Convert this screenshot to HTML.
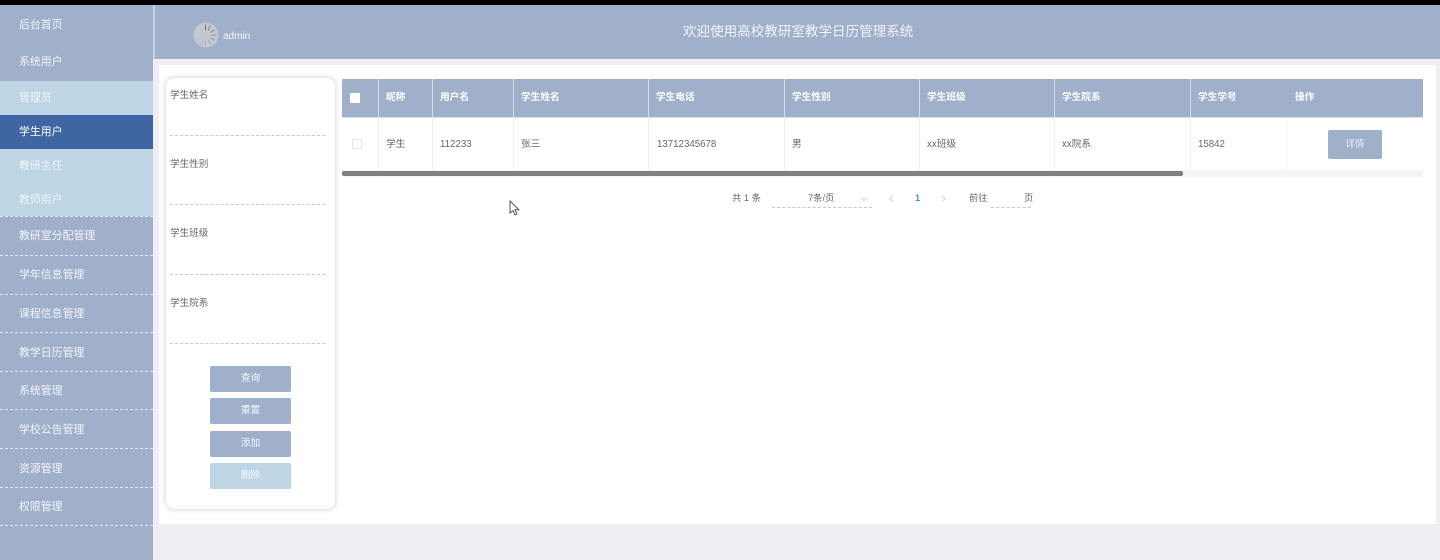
<!DOCTYPE html>
<html lang="zh"><head><meta charset="utf-8"><title>高校教研室教学日历管理系统</title>
<style>
html,body{margin:0;padding:0;background:#f0eef5}
body{width:1440px;height:560px;overflow:hidden;position:relative;font-family:"Liberation Sans","Noto Sans CJK SC",sans-serif;font-size:9.7px;color:#666;filter:blur(.35px)}
div,span{position:absolute;box-sizing:border-box;white-space:nowrap}
.t{line-height:14px;height:14px}
.m{left:19px;color:#f2f4f8;font-size:10.9px;line-height:14px;height:14px}
.dash{left:0;width:153px;height:0;border-top:1px dashed #dfe4ee}
.th{top:79px;height:39px;background:#a0afca;color:#fff;font-weight:bold;line-height:37px;padding-left:7px;border-right:1px solid #d8dfeb;border-bottom:1px solid #d8dfeb}
.td{top:118px;height:52px;background:#fff;line-height:53px;padding-left:7px;border-right:1px solid #eef0f4;color:#666}
.lab{left:170px;color:#666;line-height:14px;height:14px;font-size:9.6px}
.ln{left:170px;width:155px;height:0;border-top:1px dashed #c3c8d4}
.btn{left:210px;width:81px;height:26px;background:#a0afca;border-radius:2px;color:#f4f6fa;text-align:center;line-height:26px}
</style></head><body>
<div style="left:0;top:0;width:1440px;height:5px;background:#000"></div>
<div style="left:0;top:5px;width:153px;height:555px;background:#a0afca"></div>
<div style="left:153px;top:5px;width:2px;height:54px;background:#c9d2e1"></div>
<div style="left:0;top:81px;width:153px;height:135px;background:#bed5e5"></div>
<div style="left:0;top:115px;width:153px;height:34px;background:#3f65a3"></div>
<div class="m" style="top:18px">后台首页</div>
<div class="m" style="top:55px">系统用户</div>
<div class="m" style="top:91px;color:#eef4f8">管理员</div>
<div class="m" style="top:125px;color:#fff">学生用户</div>
<div class="m" style="top:159px;color:#eef4f8">教研主任</div>
<div class="m" style="top:193px;color:#eef4f8">教师用户</div>
<div class="dash" style="top:216px"></div>
<div class="m" style="top:229px">教研室分配管理</div>
<div class="dash" style="top:255px"></div>
<div class="m" style="top:268px">学年信息管理</div>
<div class="dash" style="top:294px"></div>
<div class="m" style="top:307px">课程信息管理</div>
<div class="dash" style="top:332px"></div>
<div class="m" style="top:346px">教学日历管理</div>
<div class="dash" style="top:371px"></div>
<div class="m" style="top:384px">系统管理</div>
<div class="dash" style="top:409px"></div>
<div class="m" style="top:423px">学校公告管理</div>
<div class="dash" style="top:448px"></div>
<div class="m" style="top:462px">资源管理</div>
<div class="dash" style="top:487px"></div>
<div class="m" style="top:500px">权限管理</div>
<div class="dash" style="top:525px"></div>

<div style="left:155px;top:5px;width:1285px;height:54px;background:#a0afca"></div>
<svg style="position:absolute;left:193px;top:21px" width="26" height="28" viewBox="0 0 26 28">
<circle cx="13" cy="14" r="12.5" fill="#c3c7cf"/>
<g stroke-width="1" stroke-linecap="round">
<path d="M12.500 4v5" stroke="#6d7280"/><path d="M17 5l-1.800 4" stroke="#7b808c"/><path d="M21 9l-3.500 2.500" stroke="#858a96"/><path d="M23 14h-4.500" stroke="#8f94a0"/><path d="M21.500 19l-3.800-2" stroke="#989da8"/><path d="M17.500 23l-2-3.500" stroke="#a2a6b0"/><path d="M12.500 24v-4" stroke="#abafb8"/><path d="M8 23l2-3.500" stroke="#b3b6be"/><path d="M4 19l3.500-2" stroke="#b8bbc3"/>
</g></svg>
<div class="t" style="left:223px;top:30px;color:#f4f6fa;font-size:10px">admin</div>
<div class="t" style="left:683px;top:23px;height:18px;line-height:18px;color:#f2f4f8;font-size:13.55px">欢迎使用高校教研室教学日历管理系统</div>

<div style="left:159px;top:65px;width:1277px;height:459px;background:#fff"></div>
<div style="left:166px;top:78px;width:169px;height:431px;background:#fff;border-radius:8px;box-shadow:0 0 4px 1px #d6d9ea"></div>
<div class="lab" style="top:89px">学生姓名</div><div class="ln" style="top:135px"></div>
<div class="lab" style="top:158px">学生性别</div><div class="ln" style="top:204px"></div>
<div class="lab" style="top:227px">学生班级</div><div class="ln" style="top:274px"></div>
<div class="lab" style="top:297px">学生院系</div><div class="ln" style="top:343px"></div>
<div class="btn" style="top:366px">查询</div>
<div class="btn" style="top:398px">重置</div>
<div class="btn" style="top:431px">添加</div>
<div class="btn" style="top:463px;background:#bed5e5">删除</div>

<div class="th" style="left:342px;width:37px"></div>
<div style="left:350px;top:93px;width:10px;height:10px;background:#fff;border-radius:1px"></div>
<div class="th" style="left:379px;width:54px">昵称</div>
<div class="th" style="left:433px;width:81px">用户名</div>
<div class="th" style="left:514px;width:135px">学生姓名</div>
<div class="th" style="left:649px;width:136px">学生电话</div>
<div class="th" style="left:785px;width:135px">学生性别</div>
<div class="th" style="left:920px;width:135px">学生班级</div>
<div class="th" style="left:1055px;width:136px">学生院系</div>
<div class="th" style="left:1191px;width:97px;border-right:0">学生学号</div>
<div class="th" style="left:1288px;width:135px;border-right:0">操作</div>

<div class="td" style="left:342px;width:37px"></div>
<div style="left:352px;top:139px;width:10px;height:10px;border:1px solid #e3e5ea;border-radius:1px;background:#fff"></div>
<div class="td" style="left:379px;width:54px">学生</div>
<div class="td" style="left:433px;width:81px">112233</div>
<div class="td" style="left:514px;width:135px">张三</div>
<div class="td" style="left:649px;width:136px;padding-left:8px">13712345678</div>
<div class="td" style="left:785px;width:135px">男</div>
<div class="td" style="left:920px;width:135px">xx班级</div>
<div class="td" style="left:1055px;width:136px">xx院系</div>
<div class="td" style="left:1191px;width:97px;border-right:0">15842</div>
<div class="td" style="left:1288px;width:135px;border-right:0;box-shadow:-1px 1px 3px rgba(120,130,160,.1)"></div>
<div style="left:1328px;top:130px;width:54px;height:29px;background:#a0afca;border-radius:2px;color:#eef1f6;text-align:center;line-height:29px;font-size:9.5px">详情</div>
<div style="left:342px;top:170px;width:1081px;height:7px;background:#f5f5f9"></div>
<div style="left:342px;top:171px;width:841px;height:5px;background:#808080;border-radius:2px"></div>

<div class="t" style="left:732px;top:191px;font-size:9.3px">共 1 条</div>
<div class="t" style="left:808px;top:191px;font-size:9.3px">7条/页</div>
<svg style="position:absolute;left:860px;top:196px" width="8" height="6" viewBox="0 0 8 6"><path d="M1 1.500l3 3 3-3" fill="none" stroke="#d0d3da"/></svg>
<div style="left:772px;top:207px;width:100px;height:0;border-top:1px dashed #c3c8d4"></div>
<svg style="position:absolute;left:889px;top:195px" width="5" height="7" viewBox="0 0 5 7"><path d="M4 .5L1 3.500 4 6.500" fill="none" stroke="#cfd2d9"/></svg>
<div class="t" style="left:915px;top:192px;font-size:9.5px;font-weight:bold;color:#4a90d6">1</div>
<svg style="position:absolute;left:941px;top:195px" width="5" height="7" viewBox="0 0 5 7"><path d="M1 .5L4 3.500 1 6.500" fill="none" stroke="#cfd2d9"/></svg>
<div class="t" style="left:969px;top:191px;font-size:9.3px">前往</div>
<div class="t" style="left:1024px;top:191px;font-size:9.3px">页</div>
<div style="left:991px;top:207px;width:40px;height:0;border-top:1px dashed #c3c8d4"></div>

<svg style="position:absolute;left:509px;top:200px" width="11" height="17" viewBox="0 0 11 17"><path d="M1 1v12l3-2.500 2 4.500 2-1-2-4.300h3.800z" fill="#fff" stroke="#555" stroke-width="1"/></svg>
</body></html>
